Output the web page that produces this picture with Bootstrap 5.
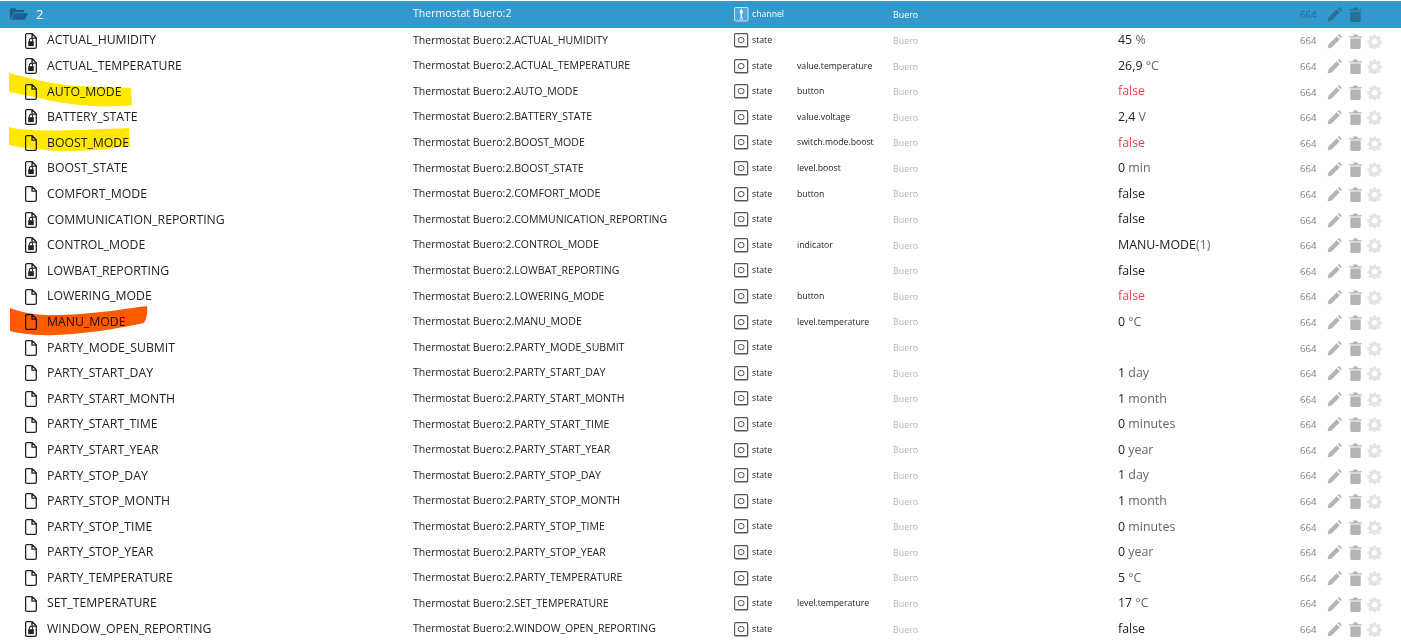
<!DOCTYPE html>
<html lang="en">
<head>
<meta charset="utf-8">
<title>Objects</title>
<link href="https://cdn.jsdelivr.net/npm/bootstrap@5.3.0/dist/css/bootstrap.min.css" rel="stylesheet">
<style>
html,body{height:640px;overflow:hidden;background:#fff}
body{font-family:"Open Sans","Noto Sans",sans-serif;color:#222;padding-top:1px;position:relative}
.obj-row{display:grid;grid-template-columns:413px 321px 18px 45px 96px 225px 182px 1fr;height:25.6px;align-items:center;white-space:nowrap}
.obj-head{height:26.8px;background:#3399cc;color:#fff}
.c-name{font-size:12.25px;display:flex;align-items:center;padding-left:25px;gap:10px}
.c-id{font-size:10.55px}
.c-ico{display:flex;align-items:center}
.c-type,.c-role{font-size:8.7px}
.c-room{font-size:8.9px;color:#b5b5b5}
.obj-head .c-room{color:#fff}
.c-val{font-size:12.4px}
.c-val.is-off{color:#f0424e}
.c-val span{color:#666}
.c-act{display:flex;align-items:center;font-size:9.6px;color:#7f7f7f;padding-top:1px}
.c-act b{font-weight:400;width:27px;padding-top:1px}
.obj-head .c-act{color:#1f6a94}
.ic-doc{width:12px;height:16px;color:#222;flex:none}
.ic-type{width:15px;height:15px;color:#555}
.ic-edit{width:15px;height:15px;color:#b4b4b4;margin-right:7px}
.ic-trash{width:13px;height:15px;color:#b4b4b4;margin-right:5px}
.ic-gear{width:15px;height:15px;color:#e4e4e4}
.ic-folder{width:20px;height:14px;margin-left:-16px;margin-right:-3px}
.folder-no{font-size:13px}
.obj-head .ic-edit,.obj-head .ic-trash{color:#2a7199}
.scribbles{position:absolute;left:0;top:0;width:1401px;height:640px;mix-blend-mode:multiply;pointer-events:none}
</style>
</head>
<body>
<svg width="0" height="0" class="position-absolute">
<symbol id="doc" viewBox="0 0 12 16"><path d="M1.8.7h5.4l4.1 4.1v9.1c0 .8-.6 1.4-1.4 1.4H1.8c-.7 0-1.2-.6-1.2-1.4V2c0-.7.5-1.3 1.2-1.3zM7 .9v4.2h4.2" fill="none" stroke="currentColor" stroke-width="1.3"/></symbol>
<symbol id="doclock" viewBox="0 0 12 16"><path d="M1.8.7h5.4l4.1 4.1v9.1c0 .8-.6 1.4-1.4 1.4H1.8c-.7 0-1.2-.6-1.2-1.4V2c0-.7.5-1.3 1.2-1.3zM7 .9v4.2h4.2" fill="none" stroke="currentColor" stroke-width="1.3"/><path d="M3.2 8.2h5.6v4.9H3.2z" fill="currentColor"/><path d="M4.4 8.4V7a1.6 1.6 0 0 1 3.2 0v1.4" fill="none" stroke="currentColor" stroke-width="1.1"/></symbol>
<symbol id="state" viewBox="0 0 15 15"><rect x="1" y="1.500" width="13.500" height="13.500" rx="1.200" fill="#c4c4c4"/><rect x=".6" y=".6" width="13" height="13" rx="1" fill="#fff" stroke="currentColor" stroke-width="1.100"/><ellipse cx="7.100" cy="7.100" rx="3" ry="2.700" fill="none" stroke="currentColor" stroke-width="1"/></symbol>
<symbol id="channel" viewBox="0 0 15 15"><rect x=".6" y=".6" width="13.400" height="13.400" rx="1" fill="#4ba7d6" stroke="#cfe6f3" stroke-width="1"/><path d="M7.300 2v8.500" stroke="#fff" stroke-width="1.300"/><rect x="5.800" y="3.400" width="3" height="3" fill="#fff"/><circle cx="7.300" cy="11.600" r="1.300" fill="none" stroke="#fff" stroke-width=".8"/></symbol>
<symbol id="edit" viewBox="0 0 15 15"><path d="M.6 14.400l.9-4 8.200-8.200 3.100 3.100-8.200 8.200zM10.700 1.200l.6-.6c.4-.4 1-.4 1.400 0l1.700 1.700c.4.4.4 1 0 1.400l-.6.6z" fill="currentColor"/></symbol>
<symbol id="trash" viewBox="0 0 13 15"><path d="M.3 2.200h3.600L4.600.6h3.800l.7 1.600h3.600v1.300H.3zM1.300 4.400h10.400v9.200c0 .8-.5 1.300-1.200 1.300h-8c-.7 0-1.200-.5-1.200-1.300z" fill="currentColor"/></symbol>
<symbol id="gear" viewBox="0 0 15 15"><path fill-rule="evenodd" d="M6.200.4h2.600l.4 1.900 1.100.5 1.700-1 1.800 1.800-1 1.700.5 1.100 1.900.4v2.600l-1.900.4-.5 1.100 1 1.700-1.800 1.800-1.700-1-1.100.5-.4 1.900H6.200l-.4-1.900-1.100-.5-1.700 1-1.800-1.800 1-1.700-.5-1.100L.3 8.900V6.300l1.900-.4.5-1.100-1-1.700 1.800-1.800 1.700 1 1.100-.5zM7.500 5a2.600 2.600 0 1 0 0 5.200 2.600 2.600 0 0 0 0-5.200z" fill="currentColor"/></symbol>
</svg>

<main id="tree">
<div class="obj-row obj-head">
  <div class="c-name"><svg class="ic-folder" viewBox="0 0 24 16"><path d="M1 13.500V2.500C1 1.500 1.700 1 2.500 1h5l2 2.200h7.500c.8 0 1.300.5 1.300 1.300V6H6.500L1.800 14z" fill="#1d5f8f"/><path d="M6.800 7H23l-4.200 7.800H2.500z" fill="#1d5f8f"/></svg><span class="folder-no">2</span></div>
  <div class="c-id">Thermostat Buero:2</div>
  <div class="c-ico"><svg class="ic-type"><use href="#channel"/></svg></div>
  <div class="c-type">channel</div>
  <div class="c-role"></div>
  <div class="c-room">Buero</div>
  <div class="c-val"></div>
  <div class="c-act"><b>664</b><svg class="ic-edit"><use href="#edit"/></svg><svg class="ic-trash"><use href="#trash"/></svg></div>
</div>
<div id="rows"></div>
</main>

<svg class="scribbles" viewBox="0 0 1401 640">
<path d="M9 73C30 78 50 84 75 86L131 88 132 105C100 109 60 104 35 97L9 92z" fill="#ffe800"/>
<path d="M9 127C30 133 80 130 129 128L130 146C100 150 70 153 45 150 30 149 18 147 9 145z" fill="#ffe800"/>
<path d="M10 308C30 316 50 316 80 314 105 312 125 309 147 306 148 314 146 320 144 323 115 329 85 334 55 335 35 336 18 333 10 331z" fill="#ff5a00"/>
</svg>

<script>
const L=1,F=0;
const data=[
["ACTUAL_HUMIDITY",L,"","45"," %"],
["ACTUAL_TEMPERATURE",L,"value.temperature","26,9"," °C"],
["AUTO_MODE",F,"button","false","","off"],
["BATTERY_STATE",L,"value.voltage","2,4"," V"],
["BOOST_MODE",F,"switch.mode.boost","false","","off"],
["BOOST_STATE",L,"level.boost","0"," min"],
["COMFORT_MODE",F,"button","false",""],
["COMMUNICATION_REPORTING",L,"","false",""],
["CONTROL_MODE",L,"indicator","MANU-MODE","(1)"],
["LOWBAT_REPORTING",L,"","false",""],
["LOWERING_MODE",F,"button","false","","off"],
["MANU_MODE",F,"level.temperature","0"," °C"],
["PARTY_MODE_SUBMIT",F,"","",""],
["PARTY_START_DAY",F,"","1"," day"],
["PARTY_START_MONTH",F,"","1"," month"],
["PARTY_START_TIME",F,"","0"," minutes"],
["PARTY_START_YEAR",F,"","0"," year"],
["PARTY_STOP_DAY",F,"","1"," day"],
["PARTY_STOP_MONTH",F,"","1"," month"],
["PARTY_STOP_TIME",F,"","0"," minutes"],
["PARTY_STOP_YEAR",F,"","0"," year"],
["PARTY_TEMPERATURE",F,"","5"," °C"],
["SET_TEMPERATURE",F,"level.temperature","17"," °C"],
["WINDOW_OPEN_REPORTING",L,"","false",""]];
document.getElementById("rows").innerHTML=data.map(d=>`<div class="obj-row">
<div class="c-name"><svg class="ic-doc"><use href="#${d[1]?'doclock':'doc'}"/></svg><span>${d[0]}</span></div>
<div class="c-id">Thermostat Buero:2.${d[0]}</div>
<div class="c-ico"><svg class="ic-type"><use href="#state"/></svg></div>
<div class="c-type">state</div>
<div class="c-role">${d[2]}</div>
<div class="c-room">Buero</div>
<div class="c-val ${d[5]?'is-off':''}">${d[3]}<span>${d[4]}</span></div>
<div class="c-act"><b>664</b><svg class="ic-edit"><use href="#edit"/></svg><svg class="ic-trash"><use href="#trash"/></svg><svg class="ic-gear"><use href="#gear"/></svg></div>
</div>`).join("");
</script>
<script src="https://cdn.jsdelivr.net/npm/bootstrap@5.3.0/dist/js/bootstrap.bundle.min.js"></script>
</body>
</html>
